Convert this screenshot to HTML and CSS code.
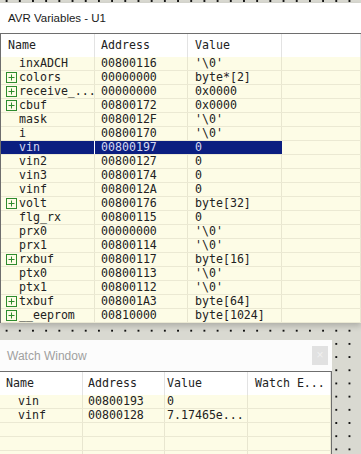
FILE: index.html
```html
<!DOCTYPE html>
<html lang="en">
<head>
  <meta charset="UTF-8">
  <title>AVR Variables</title>
  <link rel="stylesheet" href="styles.css">
</head>
<body>

  <div class="avr">
    <div class="title">AVR Variables - U1</div>
    <div class="list">
      <div class="row head">
        <div class="c">Name</div><div class="c">Address</div><div class="c">Value</div><div class="c"></div>
      </div>
      <div class="row"><div class="c name"><span class="slot"></span>inxADCH</div><div class="c">00800116</div><div class="c">'\0'</div><div class="c"></div></div>
      <div class="row"><div class="c name"><span class="slot"><svg width="11" height="11" viewBox="0 0 11 11"><rect x="0.5" y="0.5" width="10" height="10" fill="none" stroke="#2e8b2e"/><path d="M2.5 5.5h6M5.5 2.5v6" stroke="#2e8b2e"/></svg></span>colors</div><div class="c">00000000</div><div class="c">byte*[2]</div><div class="c"></div></div>
      <div class="row"><div class="c name"><span class="slot"><svg width="11" height="11" viewBox="0 0 11 11"><rect x="0.5" y="0.5" width="10" height="10" fill="none" stroke="#2e8b2e"/><path d="M2.5 5.5h6M5.5 2.5v6" stroke="#2e8b2e"/></svg></span>receive_...</div><div class="c">00000000</div><div class="c">0x0000</div><div class="c"></div></div>
      <div class="row"><div class="c name"><span class="slot"><svg width="11" height="11" viewBox="0 0 11 11"><rect x="0.5" y="0.5" width="10" height="10" fill="none" stroke="#2e8b2e"/><path d="M2.5 5.5h6M5.5 2.5v6" stroke="#2e8b2e"/></svg></span>cbuf</div><div class="c">00800172</div><div class="c">0x0000</div><div class="c"></div></div>
      <div class="row"><div class="c name"><span class="slot"></span>mask</div><div class="c">0080012F</div><div class="c">'\0'</div><div class="c"></div></div>
      <div class="row"><div class="c name"><span class="slot"></span>i</div><div class="c">00800170</div><div class="c">'\0'</div><div class="c"></div></div>
      <div class="row sel"><div class="c name"><span class="slot"></span>vin</div><div class="c">00800197</div><div class="c">0</div><div class="c"></div></div>
      <div class="row"><div class="c name"><span class="slot"></span>vin2</div><div class="c">00800127</div><div class="c">0</div><div class="c"></div></div>
      <div class="row"><div class="c name"><span class="slot"></span>vin3</div><div class="c">00800174</div><div class="c">0</div><div class="c"></div></div>
      <div class="row"><div class="c name"><span class="slot"></span>vinf</div><div class="c">0080012A</div><div class="c">0</div><div class="c"></div></div>
      <div class="row"><div class="c name"><span class="slot"><svg width="11" height="11" viewBox="0 0 11 11"><rect x="0.5" y="0.5" width="10" height="10" fill="none" stroke="#2e8b2e"/><path d="M2.5 5.5h6M5.5 2.5v6" stroke="#2e8b2e"/></svg></span>volt</div><div class="c">00800176</div><div class="c">byte[32]</div><div class="c"></div></div>
      <div class="row"><div class="c name"><span class="slot"></span>flg_rx</div><div class="c">00800115</div><div class="c">0</div><div class="c"></div></div>
      <div class="row"><div class="c name"><span class="slot"></span>prx0</div><div class="c">00000000</div><div class="c">'\0'</div><div class="c"></div></div>
      <div class="row"><div class="c name"><span class="slot"></span>prx1</div><div class="c">00800114</div><div class="c">'\0'</div><div class="c"></div></div>
      <div class="row"><div class="c name"><span class="slot"><svg width="11" height="11" viewBox="0 0 11 11"><rect x="0.5" y="0.5" width="10" height="10" fill="none" stroke="#2e8b2e"/><path d="M2.5 5.5h6M5.5 2.5v6" stroke="#2e8b2e"/></svg></span>rxbuf</div><div class="c">00800117</div><div class="c">byte[16]</div><div class="c"></div></div>
      <div class="row"><div class="c name"><span class="slot"></span>ptx0</div><div class="c">00800113</div><div class="c">'\0'</div><div class="c"></div></div>
      <div class="row"><div class="c name"><span class="slot"></span>ptx1</div><div class="c">00800112</div><div class="c">'\0'</div><div class="c"></div></div>
      <div class="row"><div class="c name"><span class="slot"><svg width="11" height="11" viewBox="0 0 11 11"><rect x="0.5" y="0.5" width="10" height="10" fill="none" stroke="#2e8b2e"/><path d="M2.5 5.5h6M5.5 2.5v6" stroke="#2e8b2e"/></svg></span>txbuf</div><div class="c">008001A3</div><div class="c">byte[64]</div><div class="c"></div></div>
      <div class="row"><div class="c name"><span class="slot"><svg width="11" height="11" viewBox="0 0 11 11"><rect x="0.5" y="0.5" width="10" height="10" fill="none" stroke="#2e8b2e"/><path d="M2.5 5.5h6M5.5 2.5v6" stroke="#2e8b2e"/></svg></span>__eeprom</div><div class="c">00810000</div><div class="c">byte[1024]</div><div class="c"></div></div>
    </div>
  </div>

  <div class="watch">
    <div class="title">
      <span>Watch Window</span>
      <span class="close">&#215;</span>
    </div>
    <div class="list">
      <div class="row head">
        <div class="c">Name</div><div class="c">Address</div><div class="c">Value</div><div class="c">Watch E...</div>
      </div>
      <div class="row"><div class="c name">vin</div><div class="c">00800193</div><div class="c">0</div><div class="c"></div></div>
      <div class="row"><div class="c name">vinf</div><div class="c">00800128</div><div class="c">7.17465e...</div><div class="c"></div></div>
      <div class="row"><div class="c name"></div><div class="c"></div><div class="c"></div><div class="c"></div></div>
      <div class="row"><div class="c name"></div><div class="c"></div><div class="c"></div><div class="c"></div></div>
      <div class="row"><div class="c name"></div><div class="c"></div><div class="c"></div><div class="c"></div></div>
    </div>
  </div>

</body>
</html>
```

FILE: styles.css
```css
* {
  margin: 0;
  padding: 0;
  box-sizing: border-box;
}

body {
  width: 361px;
  height: 454px;
  overflow: hidden;
  padding-top: 3px;
  background-color: #d9d9d1;
  background-image: radial-gradient(circle, #111 0.7px, transparent 1.1px);
  background-size: 13.2px 13.2px;
  background-position: 0 -5.6px;
  font-family: "DejaVu Sans Mono", monospace;
  font-size: 11.6px;
  color: #222;
}

.title {
  font-family: "Liberation Sans", Arial, sans-serif;
  font-size: 11.5px;
  color: #1a1a1a;
  padding-left: 8px;
}

/* upper window */
.avr {
  background: #fff;
  box-shadow: 0 3px 6px rgba(0, 0, 0, 0.2);
}

.avr .title {
  height: 30px;
  line-height: 30px;
}

.avr .list {
  border-top: 1px solid #6e6e6e;
  border-left: 1px solid #6e6e6e;
}

.row {
  display: grid;
  grid-template-columns: 94px 93px 94px 1fr;
  height: 14px;
  line-height: 13px;
  background: #fdfce6;
  border-bottom: 1px solid #ebe9d3;
}

.c {
  padding-left: 6px;
  border-right: 1px solid #e8e6d0;
  white-space: nowrap;
  overflow: hidden;
}

.row.head {
  height: 23px;
  line-height: 23px;
  background: #fff;
  border-bottom: none;
}

.row.head .c {
  border-right-color: #e3e3e3;
}

.avr .head .c:first-child {
  padding-left: 7px;
}

.avr .head .c:nth-child(3),
.avr .row .c:nth-child(3) {
  padding-left: 7px;
}

.avr .name {
  display: flex;
  align-items: center;
  padding-left: 5px;
}

.slot {
  width: 13px;
  height: 11px;
  flex: none;
  display: flex;
}

.row.sel .c:nth-child(-n+3) {
  background: #0b1e80;
  color: #d4d8f2;
  border-right-color: #0b1e80;
}

.row.sel .c:first-child {
  border-right-color: #fff;
}

/* watch window */
.watch {
  width: 332px;
  height: 114px;
  margin-top: 17px;
  overflow: hidden;
  background: #fcfcfc;
}

.watch .title {
  height: 31px;
  display: flex;
  justify-content: space-between;
  align-items: center;
  padding-left: 7px;
  padding-right: 4px;
  color: #a0a0a0;
  font-size: 12px;
}

.close {
  width: 16px;
  height: 19px;
  background: #e1e1e1;
  color: #f0f0f0;
  font-size: 12px;
  line-height: 19px;
  text-align: center;
}

.watch .list {
  border-top: 1px solid #6e6e6e;
  border-right: 1px solid #6e6e6e;
}

.watch .row {
  grid-template-columns: 83px 82px 83px 83px;
}

.watch .row .c:nth-child(2) {
  padding-left: 5px;
}

.watch .row .c:nth-child(3) {
  padding-left: 2px;
}

.watch .row .c:nth-child(4) {
  padding-left: 7px;
}

.watch .name {
  padding-left: 18px;
}
```
